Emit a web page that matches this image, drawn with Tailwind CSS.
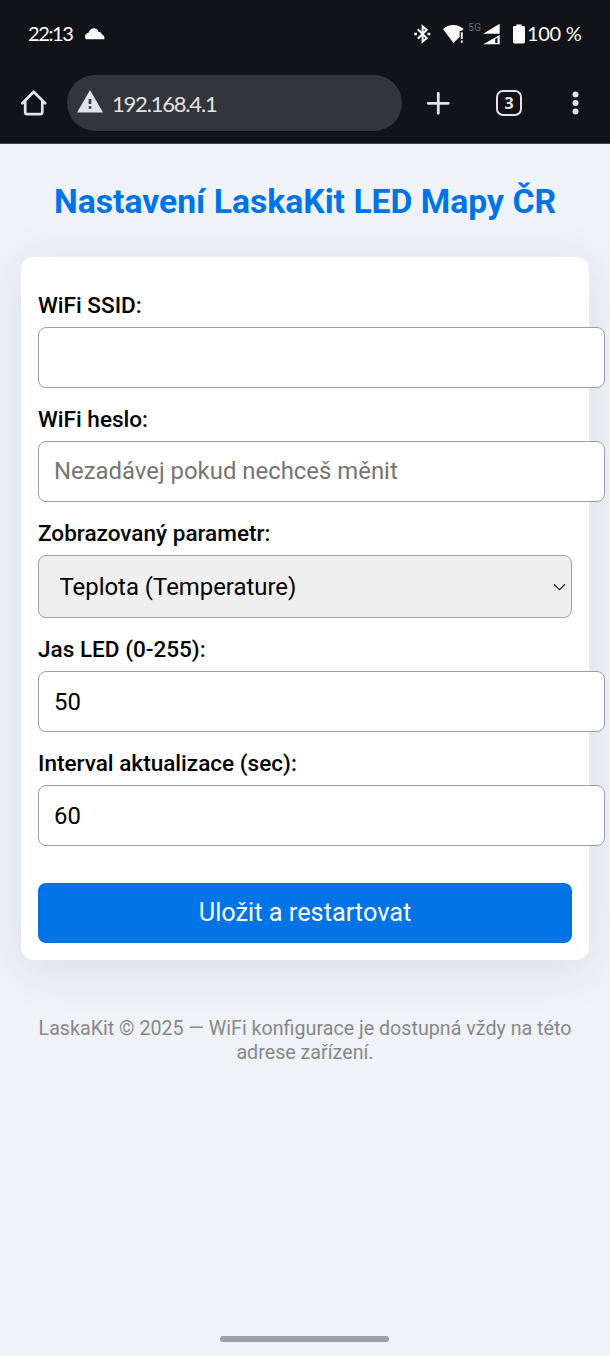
<!DOCTYPE html>
<html lang="cs">
<head>
<meta charset="utf-8">
<title>Nastavení LaskaKit LED Mapy ČR</title>
<script src="https://cdn.jsdelivr.net/npm/@tailwindcss/browser@4"></script>
</head>
<body class="flex h-[1356px] w-[610px] flex-col overflow-hidden bg-[#eff3f8] font-['Roboto',sans-serif] text-black">
<header class="h-36 shrink-0 border-b border-[#45474c] bg-[#111318] font-['Lato',sans-serif] text-white">
  <div class="flex h-[67px] items-center pl-7 pr-[28px]">
    <span class="mb-[2px] w-[45px] whitespace-nowrap text-[20px] tracking-[-1.4px]">22:13</span>
    <svg class="ml-[12px] h-[12px] w-[20px]" viewBox="0 0 20 12" fill="#fff"><path d="M1.2 11.3Q0 10.500 0 8.500 .3 5.500 3.500 4.800 5.300.3 9 .3 12.600.500 13.500 3.800 16.500 4 17 6.500 20 7.500 19.300 11.300Z"/></svg>
    <svg class="ml-auto h-[20px] w-[17px]" viewBox="0 0 17 20" fill="none" stroke="#fff" stroke-width="2"><path d="M3.800 5.300 12.700 14.200 8.600 17.700V2.300L12.700 5.800 3.800 14.700"/><path d="M.3 10H2.900M13.500 10H16.300" stroke-width="2.4"/></svg>
    <svg class="ml-[12px] h-[20px] w-[21px]" viewBox="0 0 21 20" fill="#fff"><path d="M0 5C6-.2 15-.2 20.5 5L19 6.800H16.600V13L10.500 19Z"/><path d="M17.800 8.300H19.700V15H17.800ZM17.800 16.600H19.700V18.700H17.800Z"/></svg>
    <span class="mb-[11px] ml-[4px] w-[14px] font-['Roboto',sans-serif] text-[10.5px] leading-3 text-[#65676b]">5G</span>
    <svg class="ml-[1px] h-[22px] w-[17px]" viewBox="0 0 17 22" fill="#fff"><path d="M.2 10.700 16.700.8V10.700Z"/><path fill-rule="evenodd" d="M.2 21.300 16.700 12V21.300ZM12.200 16V20H14.500V14.700Z"/></svg>
    <svg class="ml-[13px] h-[20px] w-[12px]" viewBox="0 0 11 20" preserveAspectRatio="none" fill="#fff"><path d="M3 .4H8V2H9.600Q11 2 11 3.400V18Q11 19.400 9.600 19.400H1.400Q0 19.400 0 18V3.400Q0 2 1.400 2H3Z"/></svg>
    <span class="mb-[2px] ml-[2px] w-[55px] whitespace-nowrap text-[20px] tracking-[-0.3px]">100 %</span>
  </div>
  <div class="flex h-[76px] items-start pl-[20px] pt-2">
    <svg class="mt-[14px] h-[28px] w-[28px]" viewBox="0 0 28 28" fill="none" stroke="#e2e2e9" stroke-width="2.7" stroke-linecap="round" stroke-linejoin="round"><path d="M2.300 14.300 13.700 2.800 25.200 14.300M5.200 12V23Q5.200 25.200 7.200 25.200H20.200Q22.300 25.200 22.300 23V12"/></svg>
    <div class="ml-[19px] flex h-14 w-[335px] items-center rounded-full bg-[#33353a] pl-[10px] text-[#e2e2e9]">
      <svg class="mb-[3px] h-[23px] w-[26px]" viewBox="0 0 26 23"><path fill="#e2e2e9" d="M13 0 26 22.500H0Z"/><path fill="#33353a" d="M11.700 9H14.300V14H11.700ZM11.700 16.300H14.300V18.800H11.700Z"/></svg>
      <span class="ml-[9px] whitespace-nowrap text-[22px] tracking-[-1.2px]">192.168.4.1</span>
    </div>
    <svg class="ml-[24px] mt-[16px] h-6 w-6" viewBox="0 0 24 24" stroke="#e2e2e9" stroke-width="2.8" stroke-linecap="round"><path d="M2.300 12.300H22.300M12.300 2.300V22.300"/></svg>
    <div class="ml-[46px] mt-[15px] flex h-[26px] w-[26px] items-center justify-center rounded-[7px] border-[2.5px] border-[#e2e2e9] font-['Noto_Sans',sans-serif] text-[16px] font-bold leading-none text-[#e2e2e9]">3</div>
    <svg class="ml-[50px] mt-[16px] h-6 w-[7px]" viewBox="0 0 7 24" fill="#e2e2e9"><circle cx="3.500" cy="3.500" r="3"/><circle cx="3.500" cy="12.100" r="3"/><circle cx="3.500" cy="20.500" r="3"/></svg>
  </div>
</header>
<main class="flex grow flex-col items-center">
  <h1 class="mt-[38px] h-[40px] whitespace-nowrap text-[33.7px] font-bold leading-[40px] text-[#0073e6]">Nastavení LaskaKit LED Mapy ČR</h1>
  <form class="mt-[35px] h-[703px] w-[568px] rounded-[13px] bg-white px-[17px] pt-[35px] shadow-[0_8px_50px_rgba(0,50,100,0.1)]">
    <label class="block h-[28px] text-[22.55px] font-medium leading-[28px]">WiFi SSID:</label>
    <input class="mt-[7px] block h-[61px] w-[567px] rounded-[8px] border border-[#9d9fa2] bg-white px-[15px] text-[23.9px]" type="text">
    <label class="mt-[18px] block h-[28px] text-[22.55px] font-medium leading-[28px]">WiFi heslo:</label>
    <input class="mt-[7px] block h-[61px] w-[567px] rounded-[8px] border border-[#9d9fa2] bg-white px-[15px] pb-[2px] text-[23.9px] placeholder:text-[#757575]" type="text" placeholder="Nezadávej pokud nechceš měnit">
    <label class="mt-[18px] block h-[28px] text-[22.55px] font-medium leading-[28px]">Zobrazovaný parametr:</label>
    <div class="mt-[7px] flex h-[63px] w-[534px] items-center justify-between rounded-[8px] border border-[#9d9fa2] bg-[#efefef] pl-[20.5px] pr-[5px] text-[23.9px]"><span class="pt-[2px]">Teplota (Temperature)</span>
      <svg class="h-[8px] w-[13px]" viewBox="0 0 13 8" fill="none" stroke="#222" stroke-width="1.2"><path d="M1 1.300 6.500 6.700 12 1.300"/></svg>
    </div>
    <label class="mt-[18px] block h-[28px] text-[22.55px] font-medium leading-[28px]">Jas LED (0-255):</label>
    <input class="mt-[7px] block h-[61px] w-[567px] rounded-[8px] border border-[#9d9fa2] bg-white px-[15px] text-[23.9px]" type="text" value="50">
    <label class="mt-[18px] block h-[28px] text-[22.55px] font-medium leading-[28px]">Interval aktualizace (sec):</label>
    <input class="mt-[7px] block h-[61px] w-[567px] rounded-[8px] border border-[#9d9fa2] bg-white px-[15px] text-[23.9px]" type="text" value="60">
    <button class="mt-[37px] block h-[60px] w-[534px] rounded-[8px] bg-[#0073e6] text-[25.3px] text-white" type="button">Uložit a restartovat</button>
  </form>
  <footer class="mt-[57px] text-center text-[19.68px] leading-[24px] text-[#888]">LaskaKit © 2025 — WiFi konfigurace je dostupná vždy na této<br>adrese zařízení.</footer>
  <div class="mb-[14px] mr-px mt-auto h-[6px] w-[169px] rounded-full bg-[#9da0a5]"></div>
</main>
</body>
</html>
